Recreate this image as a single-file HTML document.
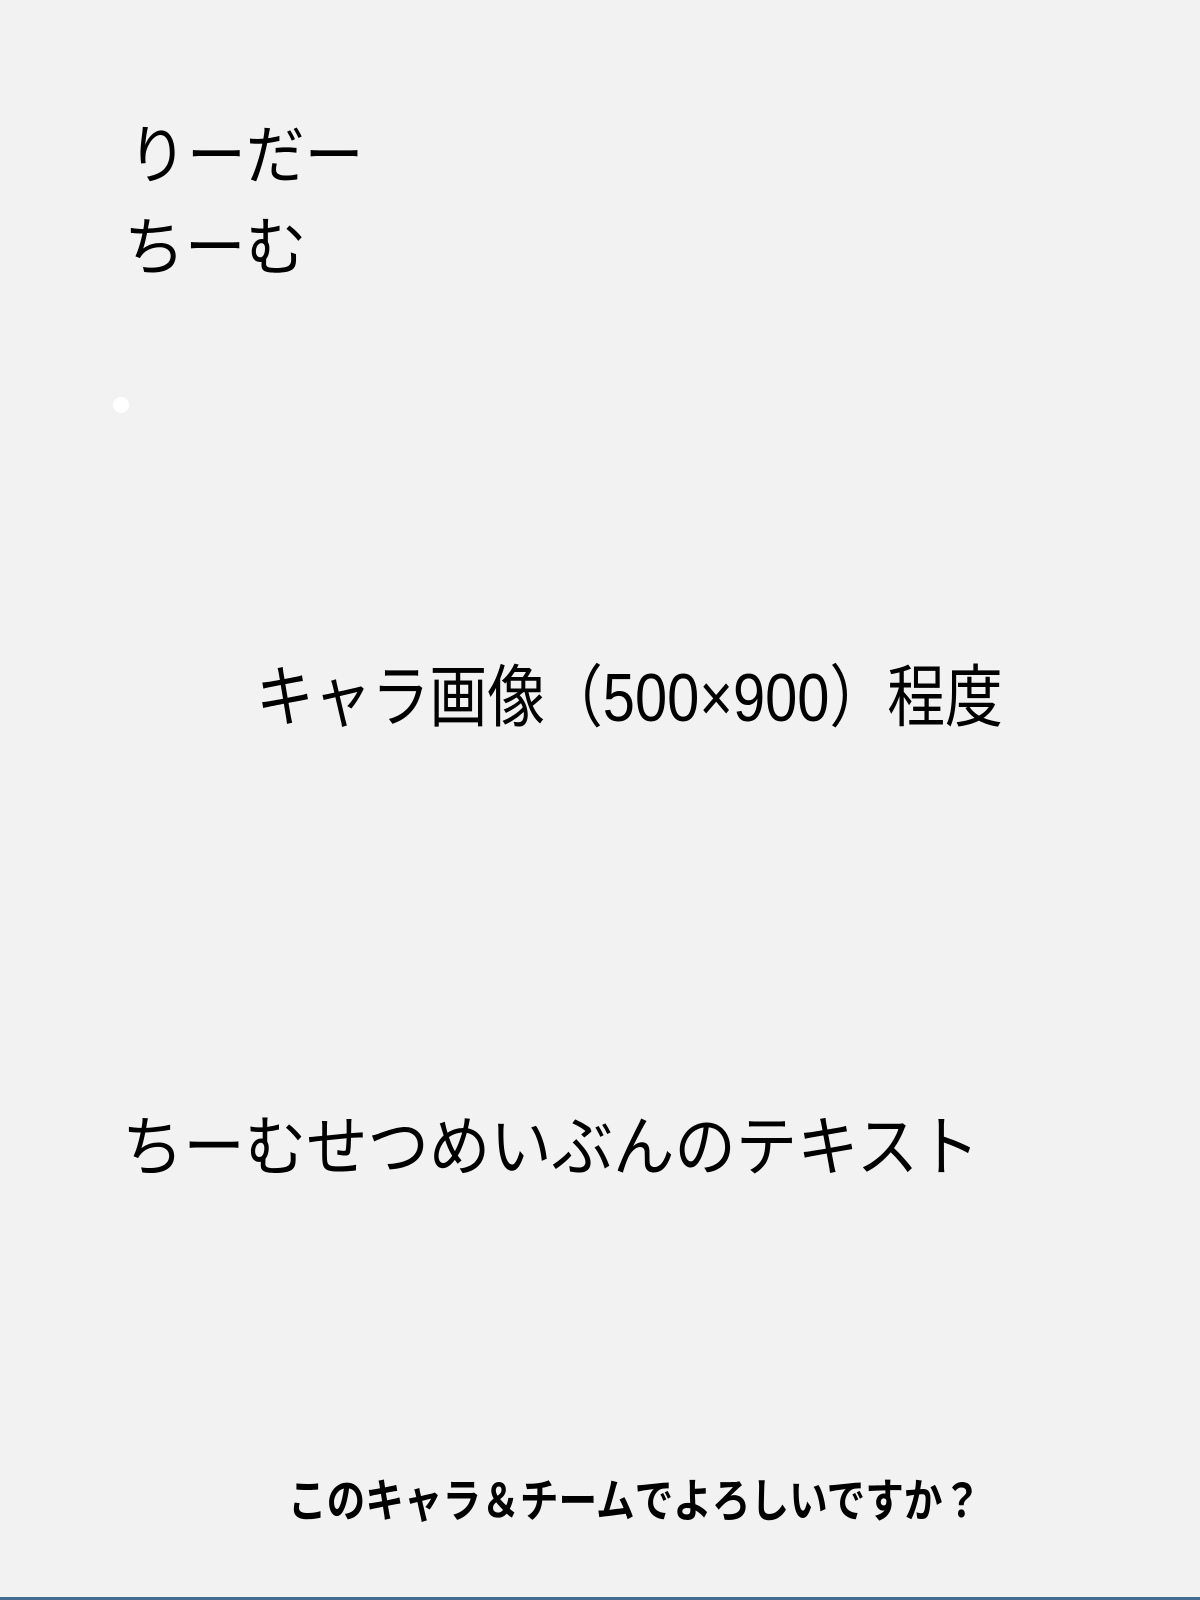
<!DOCTYPE html>
<html><head><meta charset="utf-8"><style>
html,body{margin:0;padding:0;}
body{width:1200px;height:1600px;background:#f2f2f2;position:relative;overflow:hidden;font-family:"Liberation Sans","Noto Sans CJK JP",sans-serif;color:#000;}
.t{position:absolute;white-space:nowrap;line-height:1;transform-origin:0 0;}
.bar{position:absolute;left:0;top:1597px;width:1200px;height:3px;background:#446d92;}
.dot{position:absolute;left:113px;top:397px;width:16px;height:16px;border-radius:50%;background:#fff;}
</style></head><body>
<div class="t" style="left:128px;top:124px;font-size:64px;transform:scaleX(0.92);">りーだー</div>
<div class="t" style="left:124px;top:216px;font-size:64px;transform:scaleX(0.95);">ちーむ</div>
<div class="dot"></div>
<div class="t" style="left:256px;top:664px;font-size:68px;transform:scaleX(0.85);">キャラ画像（500×900）程度</div>
<div class="t" style="left:122px;top:1114px;font-size:66px;transform:scaleX(0.93);">ちーむせつめいぶんのテキスト</div>
<div class="t" style="left:288px;top:1478px;font-size:46px;font-weight:bold;transform:scaleX(0.84);">このキャラ＆チームでよろしいですか？</div>
<div class="bar"></div>
</body></html>
